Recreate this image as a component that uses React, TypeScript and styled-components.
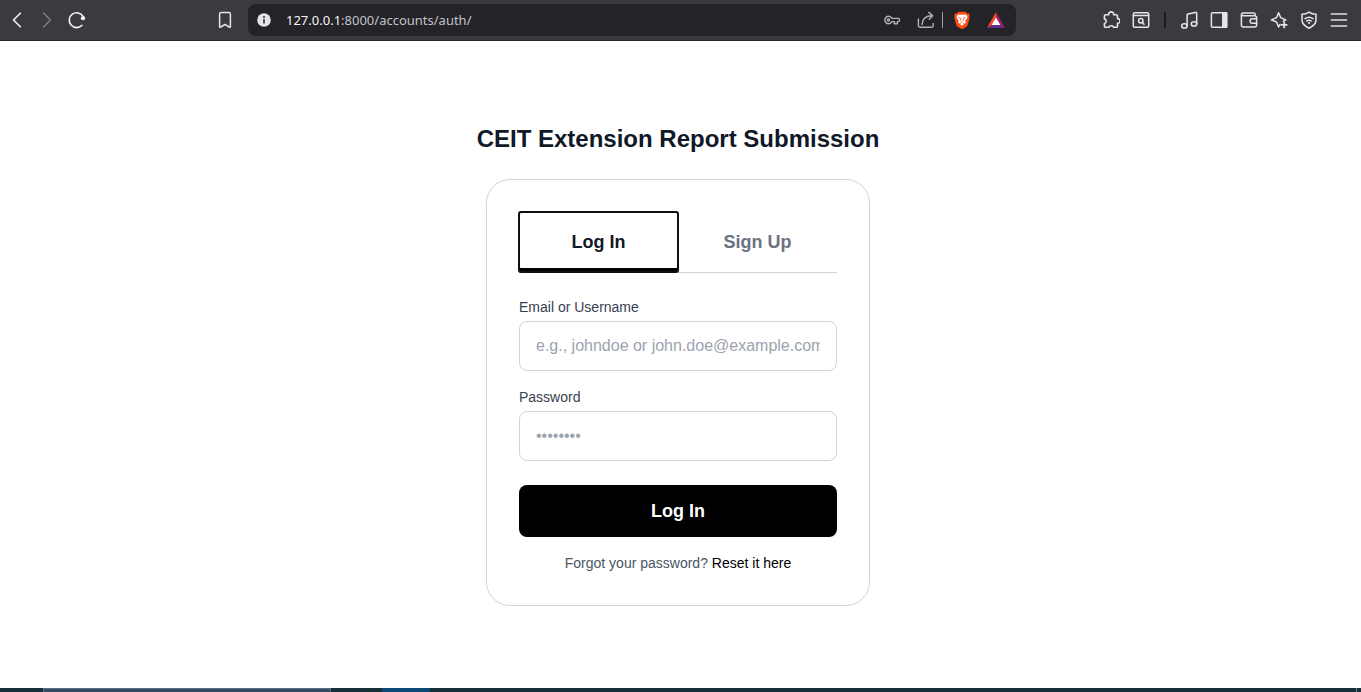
import React from "react";
import styled, { createGlobalStyle } from "styled-components";

const GlobalStyle = createGlobalStyle`
  *, *::before, *::after { box-sizing: border-box; }
  body {
    margin: 0;
    background: #ffffff;
    font-family: "Liberation Sans", Arial, sans-serif;
  }
  button, input { font: inherit; }
`;

const Page = styled.div`
  display: flex;
  flex-direction: column;
  min-height: 100vh;
`;

const Toolbar = styled.header`
  display: flex;
  align-items: center;
  height: 41px;
  padding: 0 7px 1px 2px;
  background: #3b3a3f;
  border-bottom: 1px solid #29282c;
`;

const IconGroup = styled.div`
  display: flex;
  align-items: center;
  flex: none;
`;

const NavArea = styled.nav`
  display: flex;
  flex: none;
  justify-content: space-between;
  width: 238px;
`;

const IconButton = styled.button<{ $color?: string; $width?: number }>`
  display: flex;
  align-items: center;
  justify-content: center;
  flex: none;
  width: ${(p) => p.$width ?? 30}px;
  height: 30px;
  padding: 0;
  border: 0;
  background: none;
  color: ${(p) => p.$color ?? "#e6e6ea"};
`;

const AddressBar = styled.div`
  display: flex;
  align-items: center;
  flex: 1;
  min-width: 0;
  height: 32px;
  margin: 0 80px 0 8px;
  padding: 0 4px 0 1px;
  border-radius: 8px;
  background: #242328;
`;

const Url = styled.div`
  flex: 1;
  min-width: 0;
  padding-left: 7px;
  overflow: hidden;
  white-space: nowrap;
  font-family: "Noto Sans", "Open Sans", sans-serif;
  font-size: 13px;
  line-height: 20px;
  color: #c2c2c8;
`;

const Host = styled.span`
  color: #f4f4f6;
`;

const Divider = styled.span<{ $dark?: boolean }>`
  flex: none;
  width: ${(p) => (p.$dark ? 2 : 1)}px;
  height: 16px;
  margin: ${(p) => (p.$dark ? "0 8px" : "0 1px")};
  background: ${(p) => (p.$dark ? "#1c1b1f" : "#a3a3a8")};
`;

const Main = styled.main`
  display: flex;
  flex: 1;
  flex-direction: column;
  align-items: center;
  justify-content: center;
  padding: 16px 5px 16px 0;
`;

const Title = styled.h1`
  margin: 0 0 24px;
  font-size: 24px;
  line-height: 32px;
  font-weight: 700;
  color: #111827;
`;

const Card = styled.section`
  width: 100%;
  max-width: 384px;
  padding: 32px;
  border: 1px solid #d1d5db;
  border-radius: 24px;
  background: #ffffff;
`;

const Tabs = styled.div`
  display: flex;
  margin-bottom: 24px;
  border-bottom: 1px solid #d1d5db;
`;

const Tab = styled.button<{ $active?: boolean }>`
  flex: 1;
  padding: 16px;
  border: 0;
  border-radius: 2px;
  background: none;
  font-size: 18px;
  line-height: 28px;
  font-weight: 700;
  color: ${(p) => (p.$active ? "#111827" : "#6b7280")};
  box-shadow: ${(p) => (p.$active ? "inset 0 -4px 0 #000000" : "none")};
  outline: ${(p) => (p.$active ? "2px solid #101010" : "none")};
  outline-offset: -1px;
`;

const Form = styled.form`
  display: flex;
  flex-direction: column;
`;

const Field = styled.div`
  display: flex;
  flex-direction: column;
  gap: 4px;
  margin-bottom: 16px;
`;

const Label = styled.label`
  font-size: 14px;
  line-height: 20px;
  color: #374151;
`;

const TextInput = styled.input`
  width: 100%;
  height: 50px;
  padding: 0 16px;
  border: 1px solid #d1d5db;
  border-radius: 8px;
  background: #ffffff;
  font-size: 16px;
  color: #111827;
  outline: none;
  &::placeholder {
    color: #9ca3af;
    opacity: 1;
  }
`;

const SubmitButton = styled.button`
  margin-top: 8px;
  padding: 12px;
  border: 0;
  border-radius: 8px;
  background: #000000;
  font-size: 18px;
  line-height: 28px;
  font-weight: 700;
  color: #ffffff;
`;

const Hint = styled.p`
  margin: 16px 0 0;
  text-align: center;
  font-size: 14px;
  line-height: 20px;
  color: #4b5563;
`;

const HintLink = styled.a`
  color: #000000;
  text-decoration: none;
`;

const Taskbar = styled.footer`
  display: flex;
  height: 4px;
  padding: 0 4px 0 43px;
  background: #16303a;
`;

const TaskSearch = styled.span`
  width: 288px;
  margin-right: 51px;
  border: 1px solid #5c6d7f;
  border-bottom: 0;
  background: #344b63;
`;

const TaskActive = styled.span`
  width: 48px;
  background: #0b4876;
`;

const TaskEdge = styled.span`
  width: 1px;
  margin-left: auto;
  background: #72838a;
`;

const Glyph = ({ children, weight = 1.5 }: { children: React.ReactNode; weight?: number }) => (
  <svg
    width={18}
    height={18}
    viewBox="0 0 18 18"
    fill="none"
    stroke="currentColor"
    strokeWidth={weight}
    strokeLinecap="round"
    strokeLinejoin="round"
    aria-hidden="true"
  >
    {children}
  </svg>
);

const BackIcon = () => <Glyph weight={1.6}><path d="M12.3 2.2 5.5 9l6.8 6.8" /></Glyph>;
const ForwardIcon = () => <Glyph weight={1.6}><path d="M5.7 2.2 12.5 9l-6.8 6.8" /></Glyph>;
const ReloadIcon = () => (
  <Glyph weight={1.6}>
    <path d="M14 14.3A7.4 7.4 0 1 1 15 5.4" />
    <circle cx="15" cy="7.2" r="2.1" fill="currentColor" stroke="none" />
  </Glyph>
);
const BookmarkIcon = () => (
  <Glyph>
    <path d="M3.6 3.2Q3.6 1.6 5.2 1.6h7.6q1.6 0 1.6 1.6v12.2q0 1.4-1.2.6L9 13.4 4.8 16q-1.2.8-1.2-.6Z" />
  </Glyph>
);
const InfoIcon = () => (
  <Glyph>
    <circle cx="9" cy="9" r="6.8" fill="#e4e4e8" stroke="none" />
    <circle cx="9" cy="5.9" r="1" fill="#242328" stroke="none" />
    <path d="M9 8v4.4" stroke="#242328" strokeLinecap="butt" />
  </Glyph>
);
const KeyIcon = () => (
  <Glyph weight={1.4}>
    <path d="M8.9 7.4A3.7 3.7 0 1 0 8.9 10.6H11.4v2.2h3v-2.2h1q1 0 1-1V8.4q0-1-1-1Z" />
    <circle cx="5.5" cy="9" r="1" />
  </Glyph>
);
const ShareIcon = () => (
  <Glyph weight={1.4}>
    <path d="M2.4 8v6.6q0 1.6 1.6 1.6h11.6q1.6 0 1.6-1.6v-2.2" />
    <path d="M6 13.6c.2-5.4 2.6-8.9 10.2-8.9M12.8 1.4l3.8 3.3-3.4 3.6" />
  </Glyph>
);
const LionIcon = () => (
  <Glyph>
    <path
      d="M5.4.7h7.2l1.6 1.7 1.6-.2 1 2-.5 1.3.4 1.3-2 7.2q-.3 1-1.2 1.7L10 17.7q-1 .6-2 0l-3.5-2q-.9-.7-1.2-1.7l-2-7.2.4-1.3-.5-1.3 1-2 1.6.2Z"
      fill="#fb4b14"
      stroke="none"
    />
    <path
      d="m9 3.5 2 .3 2-.4 1.5 2.3-.4 1.6-1.8 2.5.5 1.6-1.1 1.3-1.5-.8-.4.5 1.2.9L9 14.7l-2-1.4 1.2-.9-.4-.5-1.5.8-1.1-1.3.5-1.6-1.8-2.5-.4-1.6L5 3.4l2 .4Z"
      fill="#ffffff"
      stroke="none"
    />
    <path d="m5.6 6.7 2 .4v2.2M12.4 6.7l-2 .4v2.2M8.2 10.9l.8.4.8-.4" stroke="#fb4b14" strokeWidth=".8" />
  </Glyph>
);
const TriangleIcon = () => (
  <Glyph>
    <g stroke="none">
      <path d="M9 1 0 17l9-5.8Z" fill="#ff4724" />
      <path d="m9 1 9 16-9-5.8Z" fill="#9e1f63" />
      <path d="M0 17h18l-9-5.8Z" fill="#662d91" />
      <path d="m9 6.4 4.3 7.6H4.7Z" fill="#ffffff" />
    </g>
  </Glyph>
);
const PuzzleIcon = () => (
  <Glyph weight={1.6}>
    <path d="M2.4 5.1q0-1.4 1.4-1.4h3a2.5 2.2 0 1 1 4.8 0H14q1.5 0 1.5 1.4v2.6a2.1 2.3 0 1 1 0 4.5v2.7q0 1.4-1.5 1.4h-2.4q-.4-1.6-2.4-1.6t-2.4 1.6H3.8q-1.4 0-1.4-1.4V12.5q1.8-.4 1.8-2.3T2.4 7.9Z" />
  </Glyph>
);
const PageSearchIcon = () => (
  <Glyph>
    <rect x="1.3" y="1.7" width="15.4" height="14.6" rx="1.5" />
    <path d="M1.5 4.6h15" />
    <circle cx="8.8" cy="9.7" r="2.2" />
    <path d="m10.5 11.4 1.5 1.8" />
  </Glyph>
);
const MusicIcon = () => (
  <Glyph>
    <ellipse cx="4.4" cy="14.9" rx="2.7" ry="2.1" />
    <ellipse cx="14" cy="12.9" rx="2.7" ry="2.1" />
    <path d="M7.1 14.9V4q0-.8.8-1l7.8-1.6q1-.2 1 .8v10.7" />
  </Glyph>
);
const PanelIcon = () => (
  <Glyph>
    <rect x="1.4" y="1.7" width="15.2" height="14.6" rx="1" />
    <path d="M12.8 1.7h3.8v14.6h-3.8Z" fill="currentColor" />
  </Glyph>
);
const WalletIcon = () => (
  <Glyph>
    <path d="M15.2 4.7v-1q0-1.8-1.8-1.8H3.2q-1.8 0-1.8 1.8v10.4q0 2 2 2h11.2q2 0 2-2V6.7q0-2-2-2H3.2q-1.8 0-1.8-1.2" />
    <path d="M16.6 7.7h-4.2a2.3 2.3 0 0 0 0 4.6h4.2" />
  </Glyph>
);
const SparkleIcon = () => (
  <Glyph weight={1.5}>
    <path d="M10.1 13.4 8.6 16 6.7 11.5q-.2-.5-.7-.7L1.3 8.9 6 6.9q.5-.2.7-.7L8.6 1.7l1.9 4.5q.2.5.7.7l4.6 2-2.6 1.2" />
    <path d="M14.2 11.4v5M11.7 13.9h5" strokeWidth="1.8" />
  </Glyph>
);
const ShieldIcon = () => (
  <Glyph weight={1.5}>
    <path d="M9 1.1q3 2 7 2.2v5.8q0 5-7 8.1-7-3.1-7-8.1V3.3q4-.2 7-2.2Z" />
    <path d="M5 7.6q4-2.8 8 0M6.7 10q2.3-1.7 4.6 0" />
    <circle cx="9" cy="12" r="1.1" fill="currentColor" stroke="none" />
  </Glyph>
);
const MenuIcon = () => <Glyph weight={1.8}><path d="M1.5 3h15M1.5 9h15M1.5 15h15" /></Glyph>;

export default function App() {
  return (
    <Page>
      <GlobalStyle />
      <Toolbar>
        <NavArea aria-label="Browser navigation">
          <IconGroup>
            <IconButton aria-label="Back" $color="#f4f4f6"><BackIcon /></IconButton>
            <IconButton aria-label="Forward" $color="#7c7b80"><ForwardIcon /></IconButton>
            <IconButton aria-label="Reload" $color="#f4f4f6"><ReloadIcon /></IconButton>
          </IconGroup>
          <IconButton aria-label="Bookmark"><BookmarkIcon /></IconButton>
        </NavArea>
        <AddressBar>
          <IconButton aria-label="Site information"><InfoIcon /></IconButton>
          <Url><Host>127.0.0.1</Host>:8000/accounts/auth/</Url>
          <IconButton aria-label="Passwords" $color="#b2b2b7" $width={34}><KeyIcon /></IconButton>
          <IconButton aria-label="Share" $color="#b2b2b7" $width={32}><ShareIcon /></IconButton>
          <Divider />
          <IconButton aria-label="Shields" $width={36}><LionIcon /></IconButton>
          <IconButton aria-label="Rewards" $width={32}><TriangleIcon /></IconButton>
        </AddressBar>
        <IconGroup>
          <IconButton aria-label="Extensions"><PuzzleIcon /></IconButton>
          <IconButton aria-label="Search page"><PageSearchIcon /></IconButton>
          <Divider $dark />
          <IconButton aria-label="Media"><MusicIcon /></IconButton>
          <IconButton aria-label="Sidebar"><PanelIcon /></IconButton>
          <IconButton aria-label="Wallet"><WalletIcon /></IconButton>
          <IconButton aria-label="Assistant"><SparkleIcon /></IconButton>
          <IconButton aria-label="VPN"><ShieldIcon /></IconButton>
          <IconButton aria-label="Menu" $color="#b6b6ba"><MenuIcon /></IconButton>
        </IconGroup>
      </Toolbar>
      <Main>
        <Title>CEIT Extension Report Submission</Title>
        <Card>
          <Tabs role="tablist">
            <Tab type="button" role="tab" aria-selected="true" $active>Log In</Tab>
            <Tab type="button" role="tab" aria-selected="false">Sign Up</Tab>
          </Tabs>
          <Form onSubmit={(e) => e.preventDefault()}>
            <Field>
              <Label htmlFor="login">Email or Username</Label>
              <TextInput id="login" type="text" placeholder="e.g., johndoe or john.doe@example.com" />
            </Field>
            <Field>
              <Label htmlFor="password">Password</Label>
              <TextInput id="password" type="password" placeholder="••••••••" />
            </Field>
            <SubmitButton type="submit">Log In</SubmitButton>
          </Form>
          <Hint>
            Forgot your password? <HintLink href="#reset">Reset it here</HintLink>
          </Hint>
        </Card>
      </Main>
      <Taskbar>
        <TaskSearch />
        <TaskActive />
        <TaskEdge />
      </Taskbar>
    </Page>
  );
}
